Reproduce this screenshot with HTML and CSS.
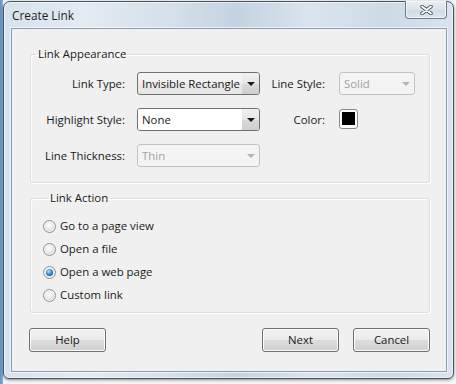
FILE: index.html
```html
<!DOCTYPE html>
<html>
<head>
<meta charset="utf-8">
<title>Create Link</title>
<link rel="stylesheet" href="styles.css">
</head>
<body>
<div class="window">
  <div class="titlebar">
    <span class="title">Create Link</span>
    <button class="close" aria-label="Close">
      <svg width="13" height="10" viewBox="0 0 13 10">
        <path d="M2 1.5 L11 8.5 M11 1.5 L2 8.5" stroke="#4a5663" stroke-width="3.6" stroke-linecap="round" fill="none"/>
        <path d="M2 1.5 L11 8.5 M11 1.5 L2 8.5" stroke="#ffffff" stroke-width="1.8" stroke-linecap="round" fill="none"/>
      </svg>
    </button>
  </div>
  <div class="client">
    <fieldset class="group group-appearance">
      <legend>Link Appearance</legend>
      <div class="grid">
        <label class="lbl">Link Type:</label>
        <div class="combo combo-plain"><span class="val">Invisible Rectangle</span><span class="arr"><i class="tri"></i></span></div>
        <label class="lbl lbl2">Line Style:</label>
        <div class="combo disabled"><span class="val">Solid</span><span class="arr"><i class="tri"></i></span></div>

        <label class="lbl">Highlight Style:</label>
        <div class="combo combo-white"><span class="val">None</span><span class="arr"><i class="tri"></i></span></div>
        <label class="lbl lbl2">Color:</label>
        <div class="swatch-cell"><span class="swatch"><span class="swatch-fill"></span></span></div>

        <label class="lbl">Line Thickness:</label>
        <div class="combo disabled"><span class="val">Thin</span><span class="arr"><i class="tri"></i></span></div>
      </div>
    </fieldset>

    <fieldset class="group group-action">
      <legend>Link Action</legend>
      <div class="radios">
        <div class="radio-row"><span class="radio"></span><span>Go to a page view</span></div>
        <div class="radio-row"><span class="radio"></span><span>Open a file</span></div>
        <div class="radio-row"><span class="radio checked"></span><span>Open a web page</span></div>
        <div class="radio-row"><span class="radio"></span><span>Custom link</span></div>
      </div>
    </fieldset>

    <div class="buttons">
      <button class="btn">Help</button>
      <div class="spacer"></div>
      <button class="btn">Next</button>
      <button class="btn">Cancel</button>
    </div>
  </div>
</div>
</body>
</html>
```
FILE: styles.css
```css
* { box-sizing: border-box; }

html, body {
  margin: 0;
  padding: 0;
}

body {
  width: 456px;
  height: 384px;
  overflow: hidden;
  background: linear-gradient(to right, #5b8fc4 0, #8fb6dc 3px, #f3f5f7 3px);
  font-family: "Segoe UI", "Open Sans", "Noto Sans", sans-serif;
  font-size: 11.4px;
  line-height: 16px;
  color: #1a1a1a;
  padding: 1px 0 0 3px;
}

.window {
  width: 451px;
  height: 378px;
  border: 1px solid #4b535c;
  border-radius: 7px 7px 6px 6px;
  background: linear-gradient(to right, #d6e2ed 0%, #e3ebf3 18%, #d3dfea 38%, #c3d3e1 52%, #d9e4ee 68%, #cddbe7 85%, #d8e3ed 100%);
  box-shadow: 0 1px 3px rgba(0, 0, 0, 0.45), inset 0 0 0 1px rgba(255, 255, 255, 0.55);
  padding: 0 6px 6px 7px;
  display: flex;
  flex-direction: column;
}

.titlebar {
  height: 26px;
  display: flex;
  justify-content: space-between;
  align-items: flex-start;
  margin-left: -7px;
  padding-left: 8px;
}

.title {
  padding-top: 5px;
  font-size: 11.8px;
  color: #1e1e1e;
}

.close {
  margin-top: -1px;
  width: 42px;
  height: 18px;
  border: 1px solid #6f7c8a;
  border-top: none;
  border-radius: 0 0 4px 4px;
  background: linear-gradient(to bottom, #e8eef4 0%, #dbe4ec 50%, #cfdae4 51%, #dce5ee 100%);
  box-shadow: inset 0 0 0 1px rgba(255, 255, 255, 0.6);
  padding: 0;
  display: flex;
  align-items: center;
  justify-content: center;
}

.close svg { display: block; }

.client {
  width: 436px;
  height: 344px;
  border: 1px solid #8b9db0;
  box-shadow: 0 0 0 1px rgba(255, 255, 255, 0.6);
  background: #f0f0f0;
  padding: 0 16px 0 18px;
  display: flex;
  flex-direction: column;
}

.group {
  margin: 0;
  border: 1px solid #d5dfe5;
  border-radius: 3px;
  box-shadow: inset 1px 1px 0 #fff, 1px 1px 0 #fff;
  width: 400px;
  min-width: 0;
}

.group legend {
  margin-left: 5px;
  padding: 0 2px;
  line-height: 16px;
  color: #1a1a1a;
}

.group-appearance {
  margin-top: 17px;
  padding: 10px 0 15px 0;
}

.grid {
  display: grid;
  grid-template-columns: 106px 123px 79px 76px;
  grid-template-rows: 23px 23px 23px;
  row-gap: 13px;
  align-items: center;
}

.lbl {
  text-align: right;
  padding-right: 12px;
  white-space: nowrap;
}

.lbl2 { padding-right: 14px; }

.combo {
  display: flex;
  height: 23px;
  border: 1px solid #707070;
  border-radius: 3px;
  overflow: hidden;
  white-space: nowrap;
}

.combo .val {
  flex: 1;
  padding-left: 4px;
  line-height: 21px;
  overflow: hidden;
}

.combo .arr {
  width: 17px;
  flex: none;
  display: flex;
  align-items: center;
  justify-content: center;
  background: linear-gradient(to bottom, #f0f0f0 0%, #e6e6e6 50%, #d9d9d9 51%, #cfcfcf 100%);
}

.tri {
  width: 0;
  height: 0;
  border-left: 4px solid transparent;
  border-right: 4px solid transparent;
  border-top: 4px solid #1a1a1a;
  margin-top: 1px;
}

.combo-plain {
  background: linear-gradient(to bottom, #f6f6f6 0%, #efefef 50%, #e9e9e9 51%, #e6e6e6 100%);
}

.combo-white .val { background: #ffffff; }

.combo.disabled {
  border-color: #bfc3c6;
  background: #f4f4f4;
  color: #a2a2a2;
}

.combo.disabled .arr { background: transparent; }
.combo.disabled .tri { border-top-color: #b4b4b4; }

.swatch-cell { display: flex; align-items: center; }

.swatch {
  width: 19px;
  height: 20px;
  border: 1px solid #8a8a8a;
  border-radius: 3px;
  background: #fdfdfd;
  display: flex;
  align-items: center;
  justify-content: center;
  margin-top: -2px;
}

.swatch-fill {
  width: 13px;
  height: 13px;
  background: #000;
}

.group-action {
  margin-top: 7px;
  padding: 11px 0 8px 12px;
}

.radios {
  display: flex;
  flex-direction: column;
  gap: 5px;
}

.radio-row {
  height: 18px;
  display: flex;
  align-items: center;
  gap: 4px;
}

.radio {
  width: 13px;
  height: 13px;
  border-radius: 50%;
  border: 1px solid #929292;
  background: radial-gradient(circle at 45% 40%, #ffffff 0%, #eeeeee 35%, #d2d2d2 80%, #c8c8c8 100%);
  box-shadow: inset 0 0 0 1px rgba(255, 255, 255, 0.7);
  display: flex;
  align-items: center;
  justify-content: center;
}

.radio.checked::after {
  content: "";
  width: 7px;
  height: 7px;
  border-radius: 50%;
  background: radial-gradient(circle at 40% 35%, #b9e3ff 0%, #3d9ae0 40%, #115ea6 75%, #0a3f70 100%);
}

.buttons {
  margin-top: 15px;
  margin-left: -1px;
  display: flex;
  gap: 14px;
}

.spacer { flex: 1; }

.btn {
  width: 77px;
  height: 24px;
  border: 1px solid #707070;
  border-radius: 3px;
  background: linear-gradient(to bottom, #f2f2f2 0%, #ebebeb 50%, #dddddd 51%, #cfcfcf 100%);
  box-shadow: inset 0 0 0 1px #fbfbfb;
  font: inherit;
  color: #1a1a1a;
  padding: 0;
}
```
